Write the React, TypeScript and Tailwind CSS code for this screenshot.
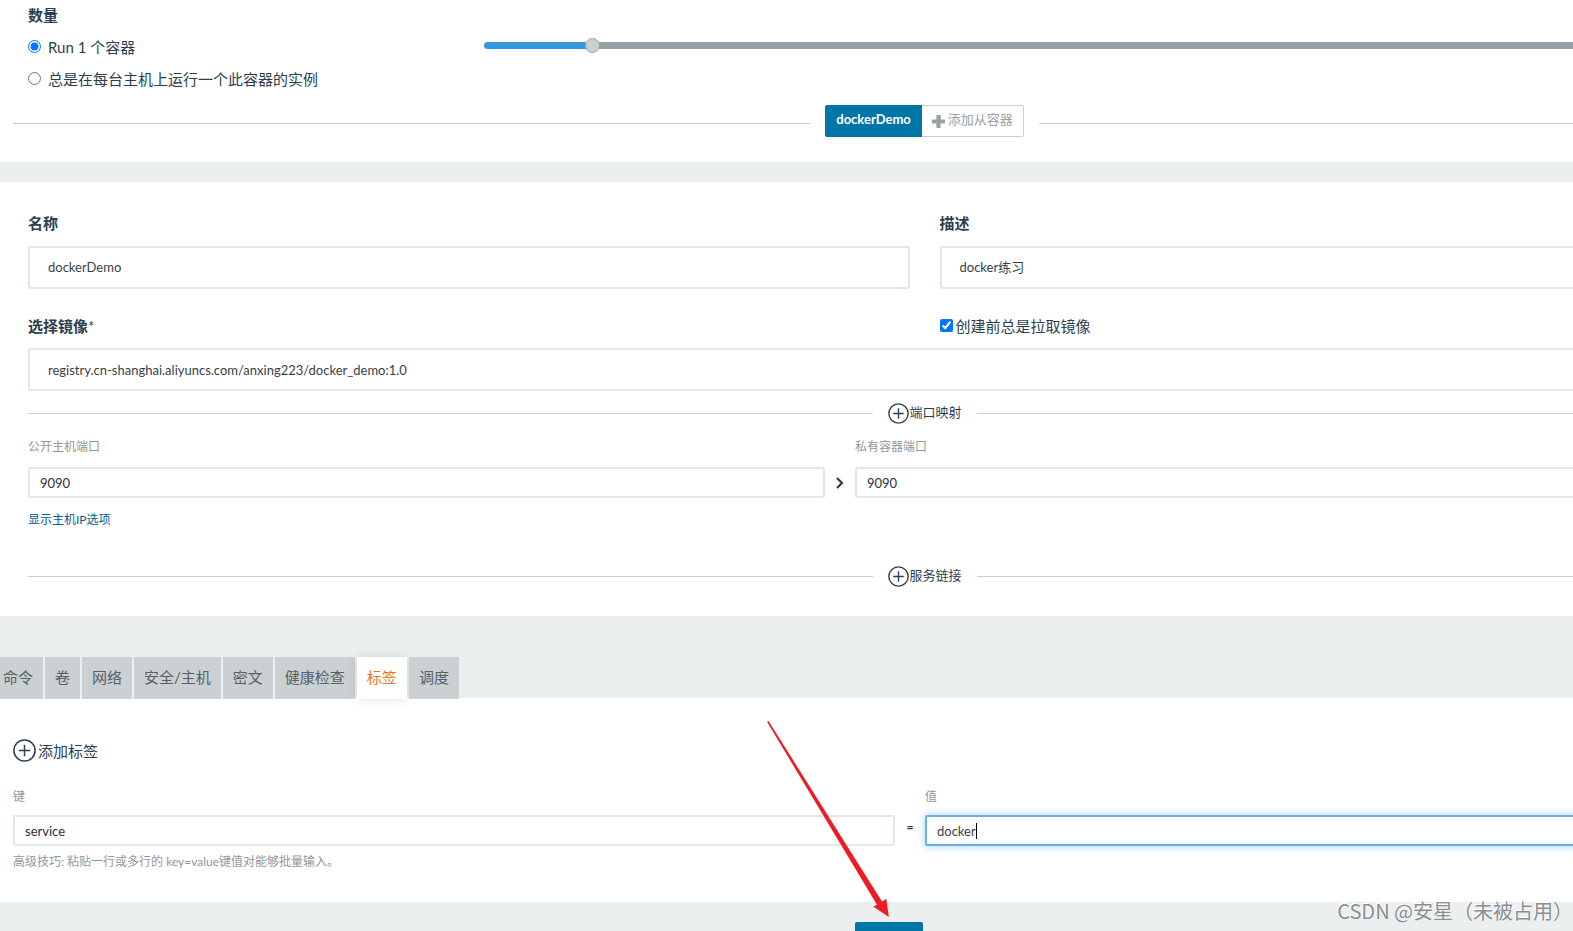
import React, { useState } from "react";

function CirclePlus({ className }: { className: string }) {
  return (
    <svg viewBox="0 0 23 23" className={className} fill="none" stroke="currentColor" strokeWidth="1.5" aria-hidden="true">
      <circle cx="11.5" cy="11.5" r="10.6" />
      <path d="M11.5 5.8v11.4M5.8 11.5h11.4" />
    </svg>
  );
}

function Rule() {
  return <div className="h-px flex-1 bg-[#c9cdce]" />;
}

function SectionDivider({ title, className }: { title: string; className: string }) {
  return (
    <div className={`flex h-[22px] items-center gap-[15px] ${className}`}>
      <Rule />
      <button type="button" className="flex items-center gap-px text-[13px] leading-5">
        <CirclePlus className="size-[21px]" />
        <span className="pb-0.5">{title}</span>
      </button>
      <Rule />
    </div>
  );
}

const largeInput =
  "block h-[43px] w-full rounded-xs border-2 border-[#e3e7e7] bg-white px-[18px] text-[13px] text-[#3a3f47] outline-none";
const smallInput =
  "block h-[31px] w-full rounded-xs border-2 border-[#e3e7e7] bg-white px-2.5 text-[13px] text-[#2c3038] outline-none";
const heading = "block text-[15px] leading-[22px] font-bold";
const caption = "block text-xs leading-5 text-[#959595]";

const tabs = ["命令", "卷", "网络", "安全/主机", "密文", "健康检查", "标签", "调度"];

function ScaleSection() {
  const [mode, setMode] = useState("fixed");
  const [scale, setScale] = useState(1);
  const max = 13;
  const fill = (scale / max) * 100;
  return (
    <section className="bg-white px-[13px] pb-[25px]">
      <div className="grid grid-cols-4">
        <div className="px-[15px] pt-1">
          <div className={heading}>数量</div>
          <div className="mt-[5px] text-[15px] whitespace-nowrap">
            <label className="flex h-8 items-center gap-[7px]">
              <input type="radio" name="mode" className="mt-0 mb-0.5 size-[13px]" checked={mode === "fixed"} onChange={() => setMode("fixed")} />
              Run 1 个容器
            </label>
            <label className="flex h-8 items-center gap-[7px]">
              <input type="radio" name="mode" className="mt-0 mb-0.5 size-[13px]" checked={mode === "global"} onChange={() => setMode("global")} />
              总是在每台主机上运行一个此容器的实例
            </label>
          </div>
        </div>
        <div className="col-span-3 px-[15px] pt-[42px]">
          <input
            type="range"
            aria-label="数量"
            min={0}
            max={max}
            value={scale}
            onChange={(e) => setScale(Number(e.target.value))}
            className="block h-[7px] w-full appearance-none rounded-full [&::-webkit-slider-thumb]:size-[15px] [&::-webkit-slider-thumb]:appearance-none [&::-webkit-slider-thumb]:rounded-full [&::-webkit-slider-thumb]:border [&::-webkit-slider-thumb]:border-[#9aa3a7] [&::-webkit-slider-thumb]:bg-[#cbd0d3]"
            style={{ background: `linear-gradient(to right, #3498db ${fill}%, #98a2a6 ${fill}%)` }}
          />
        </div>
      </div>
      <div className="mt-2.5 flex items-center gap-[15px]">
        <div className="mt-1 flex-1">
          <div className="h-px bg-[#c9cdce]" />
        </div>
        <div className="flex h-8 text-[13px]">
          <button type="button" className="rounded-l-xs bg-[#0075a8] px-[11px] pb-0.5 font-bold text-white">
            dockerDemo
          </button>
          <button type="button" className="flex items-center gap-[3px] rounded-r-xs border border-l-0 border-[#c9cdce] px-2.5 pb-0.5 text-[#98a2a6]">
            <svg viewBox="0 0 13 13" className="mt-0.5 size-[13px]" fill="currentColor" aria-hidden="true">
              <path d="M5 0h3.200a.6.6 0 0 1 .6.6V4.600h3.600a.6.6 0 0 1 .6.6v2.800a.6.6 0 0 1-.6.6H8.600v3.800a.6.6 0 0 1-.6.6H5a.6.6 0 0 1-.6-.6V8.600H.6A.6.6 0 0 1 0 8V5.200a.6.6 0 0 1 .6-.6h3.800V.6A.6.6 0 0 1 5 0z" />
            </svg>
            添加从容器
          </button>
        </div>
        <div className="mt-1 flex-1">
          <div className="h-px bg-[#c9cdce]" />
        </div>
      </div>
    </section>
  );
}

function ContainerSection() {
  return (
    <section className="mt-5 bg-white px-7 pt-[30px] pb-[29px]">
      <div className="grid grid-cols-2 gap-x-[30px]">
        <div>
          <label htmlFor="name" className={heading}>名称</label>
          <input id="name" className={`${largeInput} mt-3 pb-0.5`} defaultValue="dockerDemo" />
        </div>
        <div>
          <label htmlFor="description" className={heading}>描述</label>
          <input id="description" className={`${largeInput} mt-3 pb-0.5`} defaultValue="docker练习" />
        </div>
      </div>
      <div className="mt-[26px] grid grid-cols-2 gap-x-[30px]">
        <label htmlFor="image" className={heading}>
          选择镜像<span className="font-normal">*</span>
        </label>
        <label className="flex items-center gap-[3px] text-[15px] leading-[22px]">
          <input type="checkbox" defaultChecked className="mt-0 mb-0.5 size-[13px]" />
          创建前总是拉取镜像
        </label>
      </div>
      <input
        id="image"
        className={`${largeInput} mt-[11px]`}
        defaultValue="registry.cn-shanghai.aliyuncs.com/anxing223/docker_demo:1.0"
      />
      <SectionDivider title="端口映射" className="mt-[11px]" />
      <div className="mt-[13px] grid grid-cols-[797fr_30px_966fr] gap-y-2.5">
        <label htmlFor="public-port" className={caption}>公开主机端口</label>
        <span />
        <label htmlFor="private-port" className={caption}>私有容器端口</label>
        <input id="public-port" className={smallInput} defaultValue="9090" />
        <div className="flex items-center justify-center">
          <svg viewBox="0 0 8 12" className="h-3 w-2" fill="none" stroke="currentColor" strokeWidth="2.2" aria-hidden="true">
            <path d="M1 1l5 5-5 5" />
          </svg>
        </div>
        <input id="private-port" className={smallInput} defaultValue="9090" />
      </div>
      <div className="mt-3 text-xs leading-5">
        <a href="#host-ip" className="text-[#005f8c]">显示主机IP选项</a>
      </div>
      <SectionDivider title="服务链接" className="mt-[35px]" />
    </section>
  );
}

function LabelsSection() {
  const [active, setActive] = useState("标签");
  return (
    <>
      <div role="tablist" className="relative mt-[41px] -mb-px -ml-[7px] flex gap-0.5">
        {tabs.map((tab) => (
          <button
            key={tab}
            type="button"
            role="tab"
            aria-selected={tab === active}
            onClick={() => setActive(tab)}
            className={
              tab === active
                ? "h-[42px] bg-white px-2.5 pb-0.5 text-[15px] text-[#e87722] shadow-[0_0_10px_rgba(0,0,0,0.12)]"
                : "h-[42px] bg-[#cbd0d3] px-2.5 pb-0.5 text-[15px] text-[#566066]"
            }
          >
            {tab}
          </button>
        ))}
      </div>
      <section className="bg-white px-[13px] pt-[41px] pb-[30px]">
        <button type="button" className="flex h-[23px] items-center gap-0.5 text-[15px]">
          <CirclePlus className="size-[23px]" />
          <span className="pt-0.5">添加标签</span>
        </button>
        <div className="mt-[25px] grid grid-cols-[1fr_30px_1fr_29px] gap-y-2">
          <label htmlFor="label-key" className={caption}>键</label>
          <span />
          <label htmlFor="label-value" className={caption}>值</label>
          <span />
          <input id="label-key" className={smallInput} defaultValue="service" />
          <div className="pt-0.5 text-center text-xs leading-5 font-bold">=</div>
          <div className="relative">
            <input
              id="label-value"
              className="block h-[31px] w-full rounded-xs border-2 border-[#66afe9] bg-white px-2.5 text-[13px] text-[#3a3f47] caret-transparent shadow-[0_0_8px_rgba(102,175,233,0.6)] outline-none"
              defaultValue="docker"
            />
            <span className="absolute top-2 left-[51px] h-4 w-px bg-black" />
          </div>
        </div>
        <p className="mt-1.5 text-xs leading-5 text-[#959595]">高级技巧: 粘贴一行或多行的 key=value键值对能够批量输入。</p>
      </section>
    </>
  );
}

export default function App() {
  return (
    <div className="relative h-screen overflow-hidden bg-[#ebeff0] font-[Lato,'Noto_Sans_CJK_SC',sans-serif] text-[#2c3e50]">
      <main className="-mr-[276px]">
        <ScaleSection />
        <ContainerSection />
        <LabelsSection />
        <footer className="flex justify-center pt-5">
          <button type="button" aria-label="创建" className="h-10 w-[68px] rounded-xs bg-[#0075a8]" />
          <div className="w-[71px]" />
        </footer>
      </main>
      <svg viewBox="0 0 124 198" className="absolute top-[720px] left-[766px] h-[198px] w-[124px]" fill="#ed1c24" aria-hidden="true">
        <path d="M1 1.800L2.500 1L116 181.500L120.300 178.700L122.800 197L107.300 186.500L111 184.700Z" />
      </svg>
      <div className="absolute right-0 bottom-1 text-xl leading-8 whitespace-nowrap text-[#8c8f90] [text-shadow:-1px_-1px_0_#fff] font-['Noto_Sans_CJK_SC',sans-serif]">
        CSDN @安星（未被占用）
      </div>
    </div>
  );
}
